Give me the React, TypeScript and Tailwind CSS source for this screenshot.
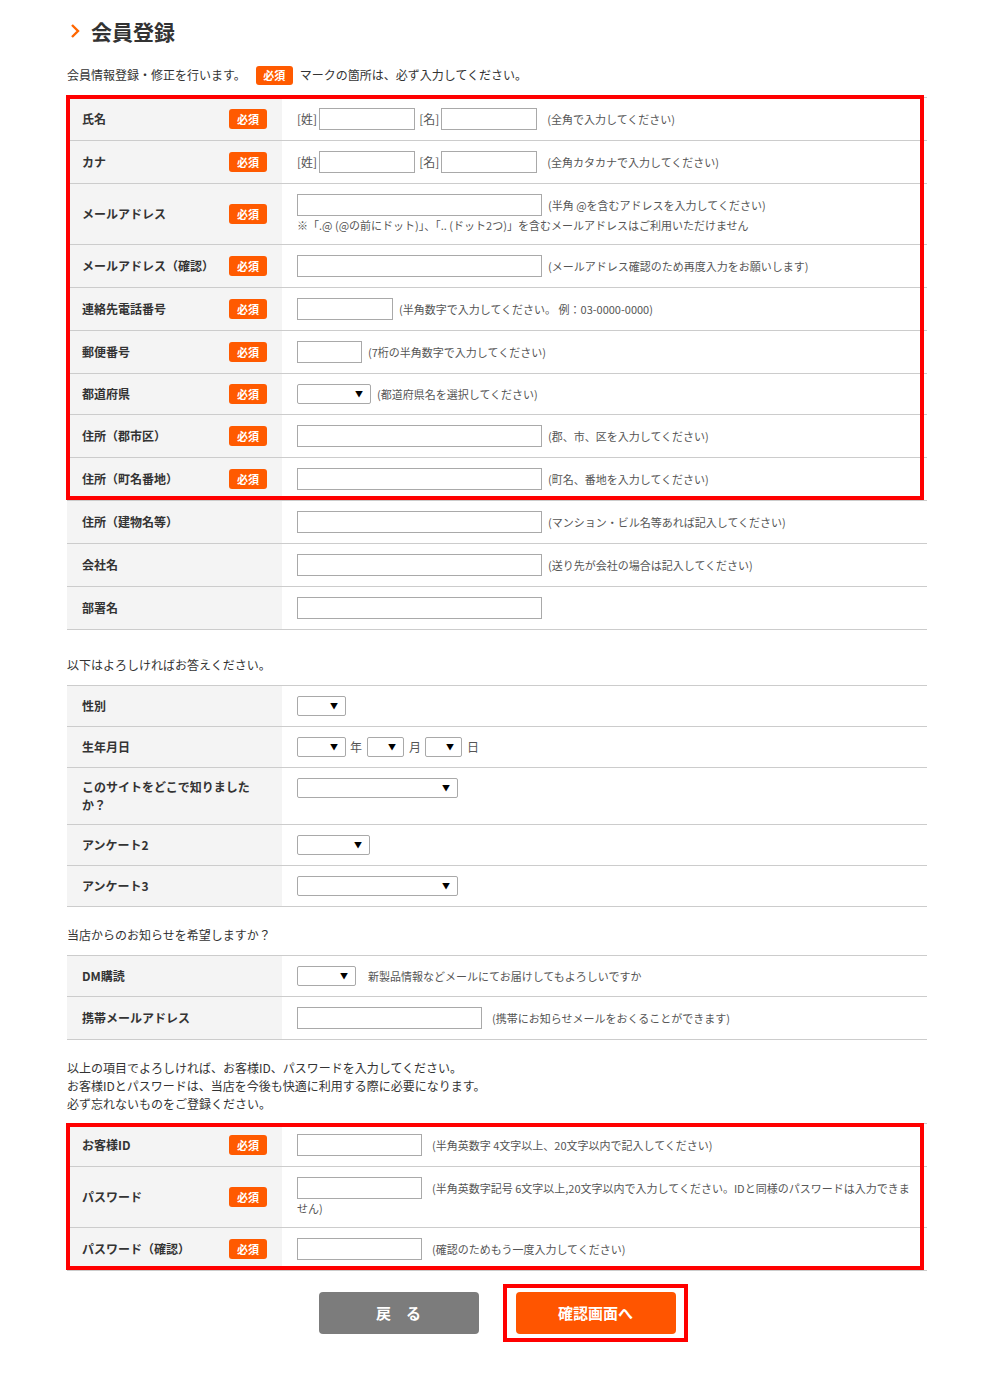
import React from "react";

const Badge = () => (
  <span className="inline-flex items-center justify-center w-[38px] h-[20px] rounded-[3px] bg-[#ff5a00] text-white text-[11px] font-bold leading-none shrink-0">
    必須
  </span>
);

const Input = ({ w }: { w: string }) => (
  <span className={`inline-block shrink-0 h-[22px] border border-[#a9a9a9] bg-white ${w}`} />
);

const Select = ({ w }: { w: string }) => (
  <span
    className={`inline-flex shrink-0 items-center justify-end h-[20px] border border-[#a9a9a9] rounded-[2px] bg-white pr-[7px] ${w}`}
  >
    <span className="text-[8px] leading-none text-black">▼</span>
  </span>
);

const Note = ({ children, className = "" }: { children: React.ReactNode; className?: string }) => (
  <span className={`text-[11px] leading-[18px] text-[#555] whitespace-nowrap ${className}`}>{children}</span>
);

function Row({
  label,
  req,
  children,
}: {
  label: React.ReactNode;
  req?: boolean;
  children: React.ReactNode;
}) {
  return (
    <div className="flex border-b border-[#ccc]">
      <div className="w-[215px] shrink-0 bg-[#f4f4f4] px-[15px] py-[10px] flex items-center justify-between">
        <span className="text-[12px] font-bold leading-[18px] text-[#333]">{label}</span>
        {req && <Badge />}
      </div>
      <div className="flex-1 px-[15px] py-[10px] flex flex-col justify-start">{children}</div>
    </div>
  );
}

const Line = ({ children }: { children: React.ReactNode }) => (
  <div className="flex items-center">{children}</div>
);

const Bracket = ({ children }: { children: React.ReactNode }) => (
  <span className="text-[12px] leading-[18px] text-[#555] mr-[2px]">{children}</span>
);

export default function App() {
  return (
    <div className="bg-white min-h-[1379px] font-['Noto_Sans_CJK_JP',sans-serif] text-[#333]">
      <div className="w-[860px] ml-[67px] pt-[17px] pb-[45px]">
        {/* Heading */}
        <div className="flex items-center h-[28px]">
          <svg width="12" height="16" viewBox="0 0 12 16" className="ml-[2px]">
            <polyline points="3,2 9,8 3,14" fill="none" stroke="#ff6600" strokeWidth="2.4" />
          </svg>
          <h1 className="ml-[10px] text-[21px] font-bold leading-[28px] text-[#333]">会員登録</h1>
        </div>

        {/* Intro */}
        <div className="mt-[20px] flex items-center h-[20px] text-[12px] text-[#333]">
          <span>会員情報登録・修正を行います。</span>
          <span className="ml-[10px] inline-flex items-center justify-center w-[37px] h-[19px] rounded-[3px] bg-[#ff5a00] text-white text-[11px] font-bold leading-none">
            必須
          </span>
          <span className="ml-[7px]">マークの箇所は、必ず入力してください。</span>
        </div>

        {/* Table 1 */}
        <div className="mt-[12px]">
          <div className="relative border-t border-[#ccc]">
            <Row label="氏名" req>
              <Line>
                <Bracket>[姓]</Bracket>
                <Input w="w-[96px]" />
                <Bracket>
                  <span className="ml-[4px]">[名]</span>
                </Bracket>
                <Input w="w-[96px]" />
                <Note className="ml-[10px]">(全角で入力してください)</Note>
              </Line>
            </Row>
            <Row label="カナ" req>
              <Line>
                <Bracket>[姓]</Bracket>
                <Input w="w-[96px]" />
                <Bracket>
                  <span className="ml-[4px]">[名]</span>
                </Bracket>
                <Input w="w-[96px]" />
                <Note className="ml-[10px]">(全角カタカナで入力してください)</Note>
              </Line>
            </Row>
            <Row label="メールアドレス" req>
              <Line>
                <Input w="w-[245px]" />
                <Note className="ml-[6px]">(半角 @を含むアドレスを入力してください)</Note>
              </Line>
              <Note>※「.@ (@の前にドット)」、「.. (ドット2つ)」を含むメールアドレスはご利用いただけません</Note>
            </Row>
            <Row label="メールアドレス（確認）" req>
              <Line>
                <Input w="w-[245px]" />
                <Note className="ml-[6px]">(メールアドレス確認のため再度入力をお願いします)</Note>
              </Line>
            </Row>
            <Row label="連絡先電話番号" req>
              <Line>
                <Input w="w-[96px]" />
                <Note className="ml-[6px]">(半角数字で入力してください。 例：03-0000-0000)</Note>
              </Line>
            </Row>
            <Row label="郵便番号" req>
              <Line>
                <Input w="w-[65px]" />
                <Note className="ml-[6px]">(7桁の半角数字で入力してください)</Note>
              </Line>
            </Row>
            <Row label="都道府県" req>
              <Line>
                <Select w="w-[74px]" />
                <Note className="ml-[6px]">(都道府県名を選択してください)</Note>
              </Line>
            </Row>
            <Row label="住所（郡市区）" req>
              <Line>
                <Input w="w-[245px]" />
                <Note className="ml-[6px]">(郡、市、区を入力してください)</Note>
              </Line>
            </Row>
            <Row label="住所（町名番地）" req>
              <Line>
                <Input w="w-[245px]" />
                <Note className="ml-[6px]">(町名、番地を入力してください)</Note>
              </Line>
            </Row>
            <div className="absolute -top-[3px] -left-[1px] right-[3px] bottom-[1px] border-4 border-[#ff0000] pointer-events-none" />
          </div>
          <Row label="住所（建物名等）">
            <Line>
              <Input w="w-[245px]" />
              <Note className="ml-[6px]">(マンション・ビル名等あれば記入してください)</Note>
            </Line>
          </Row>
          <Row label="会社名">
            <Line>
              <Input w="w-[245px]" />
              <Note className="ml-[6px]">(送り先が会社の場合は記入してください)</Note>
            </Line>
          </Row>
          <Row label="部署名">
            <Line>
              <Input w="w-[245px]" />
            </Line>
          </Row>
        </div>

        <p className="mt-[26px] mb-[11px] text-[12px] leading-[18px] text-[#333]">以下はよろしければお答えください。</p>

        {/* Table 2 */}
        <div className="border-t border-[#ccc]">
          <Row label="性別">
            <Line>
              <Select w="w-[49px]" />
            </Line>
          </Row>
          <Row label="生年月日">
            <Line>
              <Select w="w-[49px]" />
              <span className="ml-[4px] mr-[5px] text-[12px] text-[#555]">年</span>
              <Select w="w-[37px]" />
              <span className="ml-[5px] mr-[4px] text-[12px] text-[#555]">月</span>
              <Select w="w-[37px]" />
              <span className="ml-[5px] text-[12px] text-[#555]">日</span>
            </Line>
          </Row>
          <Row
            label={
              <>
                このサイトをどこで知りました
                <br />
                か？
              </>
            }
          >
            <Line>
              <Select w="w-[161px]" />
            </Line>
          </Row>
          <Row label="アンケート2">
            <Line>
              <Select w="w-[73px]" />
            </Line>
          </Row>
          <Row label="アンケート3">
            <Line>
              <Select w="w-[161px]" />
            </Line>
          </Row>
        </div>

        <p className="mt-[19px] mb-[11px] text-[12px] leading-[18px] text-[#333]">当店からのお知らせを希望しますか？</p>

        {/* Table 3 */}
        <div className="border-t border-[#ccc]">
          <Row label="DM購読">
            <Line>
              <Select w="w-[59px]" />
              <Note className="ml-[12px]">新製品情報などメールにてお届けしてもよろしいですか</Note>
            </Line>
          </Row>
          <Row label="携帯メールアドレス">
            <Line>
              <Input w="w-[185px]" />
              <Note className="ml-[10px]">(携帯にお知らせメールをおくることができます)</Note>
            </Line>
          </Row>
        </div>

        <div className="mt-[19px] mb-[10px] text-[12px] leading-[18px] text-[#333]">
          <p>以上の項目でよろしければ、お客様ID、パスワードを入力してください。</p>
          <p>お客様IDとパスワードは、当店を今後も快適に利用する際に必要になります。</p>
          <p>必ず忘れないものをご登録ください。</p>
        </div>

        {/* Table 4 */}
        <div className="relative border-t border-[#ccc]">
          <Row label="お客様ID" req>
            <Line>
              <Input w="w-[125px]" />
              <Note className="ml-[10px]">(半角英数字 4文字以上、20文字以内で記入してください)</Note>
            </Line>
          </Row>
          <Row label="パスワード" req>
            <Line>
              <Input w="w-[125px]" />
              <Note className="ml-[10px]">(半角英数字記号 6文字以上,20文字以内で入力してください。IDと同様のパスワードは入力できま</Note>
            </Line>
            <Note>せん)</Note>
          </Row>
          <Row label="パスワード（確認）" req>
            <Line>
              <Input w="w-[125px]" />
              <Note className="ml-[10px]">(確認のためもう一度入力してください)</Note>
            </Line>
          </Row>
          <div className="absolute -top-[1px] -left-[1px] right-[3px] bottom-[1px] border-4 border-[#ff0000] pointer-events-none" />
        </div>

        {/* Buttons */}
        <div className="mt-[21px] flex justify-center gap-[37px]">
          <button className="w-[160px] h-[42px] rounded-[4px] bg-[#7c7c7c] text-white text-[15px] font-bold">
            戻　る
          </button>
          <div className="relative">
            <button className="w-[160px] h-[42px] rounded-[4px] bg-[#ff5500] text-white text-[15px] font-bold">
              確認画面へ
            </button>
            <div className="absolute -top-[8px] -bottom-[8px] -left-[13px] -right-[12px] border-4 border-[#ff0000] pointer-events-none" />
          </div>
        </div>
      </div>
    </div>
  );
}
